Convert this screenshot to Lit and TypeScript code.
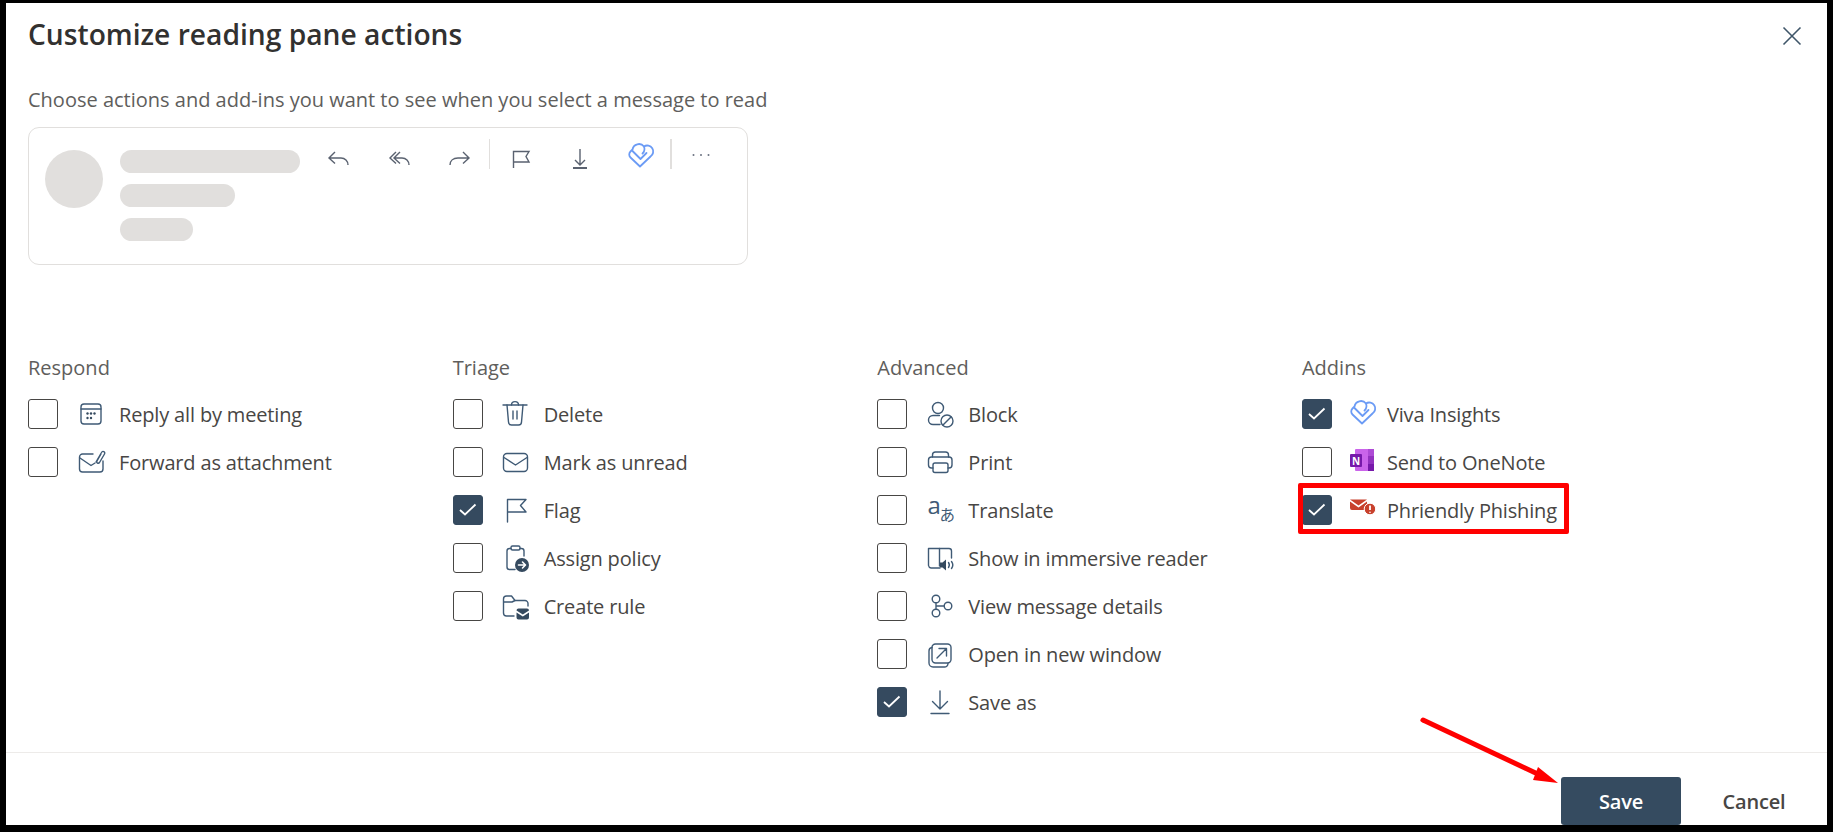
import { LitElement, html, css, svg } from "lit";
import { customElement } from "lit/decorators.js";

const I: Record<string, unknown> = {
  calendar: svg`<rect x="6" y="6" width="20" height="20" rx="3"/><path d="M6 11H26"/><g class="f"><circle cx="12.5" cy="15.5" r="1.2"/><circle cx="16" cy="15.5" r="1.2"/><circle cx="19.5" cy="15.5" r="1.2"/><circle cx="12.5" cy="20" r="1.2"/><circle cx="16" cy="20" r="1.2"/></g>`,
  attach: svg`<path d="M18 8H7.500A3 3 0 0 0 4.500 11V23A3 3 0 0 0 7.500 26H25A3 3 0 0 0 28 23V15"/><path d="M5 12L16 19.500L20 17"/><path d="M21 16L26.500 6.500C27.500 4.500 30.500 5.500 29.500 8L24.500 16.500C23.500 18 21 17 22 15L26 8"/>`,
  trash: svg`<path d="M3 7H27"/><path d="M11.500 7C11.500 2.500 18.500 2.500 18.500 7"/><path d="M7 7L8.500 24A3 3 0 0 0 11.500 27H18.500A3 3 0 0 0 21.500 24L23 7"/><path d="M13 13V21M17 13V21"/>`,
  mail: svg`<rect x="3.500" y="7.500" width="24" height="18" rx="3.500"/><path d="M4 11.500L15.500 19L27 11.500"/>`,
  flag: svg`<path d="M7.500 28V5.500H26L20.500 11.500L26 18H7.500"/>`,
  policy: svg`<path d="M11 6.500H9.500A2.500 2.500 0 0 0 7 9V25A2.500 2.500 0 0 0 9.500 27.500H15"/><path d="M20 6.500H21.500A2.500 2.500 0 0 1 24 9V14"/><rect x="11" y="4" width="9" height="4" rx="1.500"/><circle class="f" cx="22" cy="23" r="7"/><path class="w" d="M18.500 23H25M22.500 20L25.500 23L22.500 26"/>`,
  rule: svg`<path d="M14 26H6.500A3 3 0 0 1 3.500 23V9A3 3 0 0 1 6.500 6H11.500L15 10.500H25A3 3 0 0 1 28 13.500V16"/><path d="M4 12H12L15 10.500"/><path class="f" d="M16.500 20.500A2 2 0 0 1 18.500 18.500H27A2 2 0 0 1 29 20.500L22.800 24.500ZM16.500 22.500L22.800 26.500L29 22.500V27.500A2 2 0 0 1 27 29.500H18.500A2 2 0 0 1 16.500 27.500Z" stroke="none"/>`,
  block: svg`<circle cx="14" cy="10" r="5.500"/><path d="M15.500 17.500H9A4.500 4.500 0 0 0 9 26.500H16"/><circle cx="23" cy="23" r="6"/><path d="M19 27L27 19"/>`,
  print: svg`<path d="M8.500 11V9A3 3 0 0 1 11.500 6H21.500A3 3 0 0 1 24.500 9V11"/><path d="M9 22H7.500A3 3 0 0 1 4.500 19V14A3 3 0 0 1 7.500 11H25A3 3 0 0 1 28 14V19A3 3 0 0 1 25 22H24"/><rect x="9" y="17" width="15" height="9.500" rx="2"/>`,
  reader: svg`<path d="M16 26H7A3 3 0 0 1 4.500 23.500V6.500H15.500V24"/><path d="M15.500 6.500H25A2.500 2.500 0 0 1 27.500 9V16"/><path class="f" stroke="none" d="M16 20.500H18.500L22 17.500V28.500L18.500 25.500H16Z"/><path d="M24.500 20.500C25.500 22 25.500 24 24.500 25.500M27.500 19.500C29 21.500 29 24.500 27.500 26.500"/>`,
  details: svg`<circle cx="12" cy="9" r="3.800"/><circle cx="12" cy="23" r="3.800"/><circle cx="24" cy="16" r="3.800"/><path d="M12 13V19M12 16H20"/>`,
  open: svg`<rect x="8" y="6" width="19" height="19" rx="3.500"/><path d="M8 9.500A3.500 3.500 0 0 0 5 13V25A4 4 0 0 0 9 29H20A3.500 3.500 0 0 0 24 25.500"/><path d="M13 20L22 11M15 10.500H22.500V18"/>`,
  save: svg`<path d="M16 5V23M8.500 15.500L16 23L23.500 15.500M7 27.500H25"/>`,
};

const VIVA = svg`<path d="M12 23.500L2.500 14.500A4.200 4.200 0 0 1 2.500 8.500L4.500 6.500A6.500 6.500 0 0 1 16 3.500A5.500 5.500 0 0 1 22.500 13.500Z"/><path d="M4.500 8L12.500 16L18.500 10"/><path d="M16 3.500C17 6 16.500 8.500 14.500 10.500"/>`;

@customElement("app-root")
export class AppRoot extends LitElement {
  static styles = css`
    :host { display: block; position: relative; width: 1833px; height: 832px; box-sizing: border-box; background: #000; padding: 3px 6px 7px 6px; font-family: "Open Sans", "Noto Sans", sans-serif; color: #484644; overflow: hidden; }
    .dialog { height: 100%; background: #fff; display: flex; flex-direction: column; }
    .main { flex: 1; padding: 13px 22px 0 22px; }
    .head { display: flex; justify-content: space-between; align-items: center; height: 36px; }
    h1 { margin: 0; font-size: 28.2px; font-weight: 600; line-height: 36px; color: #323130; }
    .close { width: 24px; height: 24px; margin-right: 1px; margin-top: 4px; }
    .close path { stroke: #3f5669; stroke-width: 1.6; fill: none; }
    .sub { margin: 34px 0 13px; font-size: 20px; line-height: 28px; color: #605e5c; }
    .card { width: 720px; height: 138px; box-sizing: border-box; border: 1.5px solid #e1dfdd; border-radius: 11px; padding: 22px 0 0 15.500px; display: flex; align-items: flex-start; }
    .avatar { width: 58px; height: 58px; border-radius: 50%; background: #e1dfdd; flex: none; }
    .bars { display: flex; flex-direction: column; gap: 11px; margin-left: 17px; width: 180px; flex: none; }
    .bar { height: 23px; border-radius: 12px; background: #e1dfdd; }
    .b1 { width: 180px; } .b2 { width: 115px; } .b3 { width: 73px; }
    .tools { display: flex; margin: -11px 0 0 9px; }
    .tool { width: 60px; height: 30px; display: flex; justify-content: center; }
    .tool svg { width: 30px; height: 30px; fill: none; stroke: #5a6270; stroke-width: 1.4; overflow: visible; }
    .tool .blue { stroke: #6b9bf5; stroke-width: 1.8; stroke-linejoin: round; stroke-linecap: round; }
    .tool .dot { fill: #6b7280; stroke: none; }
    .sep { width: 1px; height: 30px; background: #e1dfdd; }
    .sep.wide { width: 2px; }
    .cols { display: grid; grid-template-columns: repeat(4, 424.67px); margin-top: 89px; }
    h2 { margin: 0 0 17px; font-size: 20px; font-weight: 400; line-height: 28px; color: #605e5c; }
    .rows { display: flex; flex-direction: column; gap: 18px; }
    .row { display: flex; align-items: center; height: 30px; font-size: 20px; letter-spacing: -0.16px; white-space: nowrap; }
    .box { width: 30px; height: 30px; box-sizing: border-box; border: 1px solid #484644; border-radius: 3px; flex: none; display: flex; align-items: center; justify-content: center; }
    .box.on { background: #354a5f; border-color: #354a5f; }
    .box svg { width: 20px; height: 20px; fill: none; stroke: #fff; stroke-width: 1.8; }
    .icon { width: 32px; height: 32px; margin: 0 12px 0 17px; flex: none; fill: none; stroke: #3f5a75; stroke-width: 1.4; stroke-linecap: round; stroke-linejoin: round; overflow: visible; }
    .addins .icon { margin-right: 6px; }
    .icon .f { fill: #354a5f; stroke: none; }
    .icon .w { stroke: #fff; stroke-width: 1.6; }
    .icon text { stroke: none; fill: #3f5a75; }
    .foot { height: 73px; box-sizing: border-box; border-top: 1px solid #edebe9; display: flex; justify-content: flex-end; align-items: flex-end; }
    button { font: inherit; border: 0; background: none; height: 48px; font-size: 20px; padding: 0; letter-spacing: -0.2px; }
    .save { width: 120px; background: #354b60; color: #fff; font-weight: 600; border-radius: 3px; }
    .cancel { width: 146px; color: #484644; font-weight: 600; }
    .mark { position: absolute; left: 1298px; top: 483px; width: 271px; height: 51px; box-sizing: border-box; border: 5px solid #f00; border-radius: 2px; }
    .arrow { position: absolute; left: 1410px; top: 710px; width: 160px; height: 85px; }
  `;

  private box(on: boolean) {
    return html`<span class="box ${on ? "on" : ""}">${on
      ? html`<svg viewBox="0 0 20 20"><path d="M2 10L7 14.500L17.500 4.500"/></svg>` : ""}</span>`;
  }

  private row(label: string, icon: unknown, on = false) {
    return html`<div class="row">${this.box(on)}<svg class="icon" viewBox="0 0 32 32">${icon}</svg><span>${label}</span></div>`;
  }

  render() {
    const translate = svg`<text x="3.500" y="20" font-size="24" font-family="Open Sans">a</text><text x="15.500" y="26.500" font-size="15.500" font-family="Noto Sans CJK JP">あ</text>`;
    const viva = svg`<g transform="translate(1 2)" stroke="#6b9bf5" stroke-width="1.8">${VIVA}</g>`;
    const note = svg`<rect x="6" y="3" width="19" height="22" rx="1" fill="#ca64ea" stroke="none"/><rect x="19" y="3" width="6" height="7" fill="#ae4bd5" stroke="none"/><rect x="19" y="10" width="6" height="8" fill="#9332bf" stroke="none"/><rect x="19" y="18" width="6" height="7" fill="#7719aa" stroke="none"/><rect x="1" y="8" width="12" height="13" rx="1" fill="#7719aa" stroke="none"/><text x="3" y="18.500" font-size="10" font-weight="700" font-family="Open Sans" style="fill:#fff">N</text>`;
    const phish = svg`<path d="M1 5.500H18L9.500 11.500Z" fill="#c8412c" stroke="none"/><path d="M1 7.500L9.500 13.500L18 7.500V14A2 2 0 0 1 16 16H3A2 2 0 0 1 1 14Z" fill="#c8412c" stroke="none"/><circle cx="21" cy="15" r="5.800" fill="#c8412c" stroke="#fff" stroke-width="1"/><path d="M21 11.500V16M21 17.800V18.800" stroke="#fff" stroke-width="1.800" stroke-linecap="butt"/>`;
    return html`
      <div class="dialog">
        <div class="main">
          <div class="head">
            <h1>Customize reading pane actions</h1>
            <svg class="close" viewBox="0 0 24 24"><path d="M3.500 3.500L20.500 20.500M20.500 3.500L3.500 20.500"/></svg>
          </div>
          <p class="sub">Choose actions and add-ins you want to see when you select a message to read</p>
          <div class="card">
            <div class="avatar"></div>
            <div class="bars"><div class="bar b1"></div><div class="bar b2"></div><div class="bar b3"></div></div>
            <div class="tools">
              <div class="tool"><svg viewBox="0 0 30 30"><path d="M11 13L5 19L11 24.500M5 19H17C21 19 24 22 24 26"/></svg></div>
              <div class="tool"><svg viewBox="0 0 30 30"><path d="M12 13L6 19L12 24.500M16 13L10 19L16 24.500M10 19H18C22 19 25 22 25 26"/></svg></div>
              <div class="tool"><svg viewBox="0 0 30 30"><path d="M19 13L25 19L19 24.500M25 19H14C9 19 6 22 6 26"/></svg></div>
              <div class="sep"></div>
              <div class="tool"><svg viewBox="0 0 30 30"><path d="M8.500 29V12.500H24L21 17.500L24 23H8.500"/></svg></div>
              <div class="tool"><svg viewBox="0 0 30 30"><path d="M15 10V26M10 21L15 26L20 21"/><path d="M8 29H22" stroke-width="2"/></svg></div>
              <div class="tool"><svg viewBox="0 0 30 30"><g class="blue" transform="translate(3 4)">${VIVA}</g></svg></div>
              <div class="sep wide"></div>
              <div class="tool"><svg viewBox="0 0 30 30"><circle class="dot" cx="6.500" cy="16" r="1"/><circle class="dot" cx="14" cy="16" r="1"/><circle class="dot" cx="21.500" cy="16" r="1"/></svg></div>
            </div>
          </div>
          <div class="cols">
            <section><h2>Respond</h2><div class="rows">
              ${this.row("Reply all by meeting", I.calendar)}
              ${this.row("Forward as attachment", I.attach)}
            </div></section>
            <section><h2>Triage</h2><div class="rows">
              ${this.row("Delete", I.trash)}
              ${this.row("Mark as unread", I.mail)}
              ${this.row("Flag", I.flag, true)}
              ${this.row("Assign policy", I.policy)}
              ${this.row("Create rule", I.rule)}
            </div></section>
            <section><h2>Advanced</h2><div class="rows">
              ${this.row("Block", I.block)}
              ${this.row("Print", I.print)}
              ${this.row("Translate", translate)}
              ${this.row("Show in immersive reader", I.reader)}
              ${this.row("View message details", I.details)}
              ${this.row("Open in new window", I.open)}
              ${this.row("Save as", I.save, true)}
            </div></section>
            <section class="addins"><h2>Addins</h2><div class="rows">
              ${this.row("Viva Insights", viva, true)}
              ${this.row("Send to OneNote", note)}
              ${this.row("Phriendly Phishing", phish, true)}
            </div></section>
          </div>
        </div>
        <div class="foot"><button class="save">Save</button><button class="cancel">Cancel</button></div>
      </div>
      <div class="mark"></div>
      <svg class="arrow" viewBox="0 0 160 85"><path d="M13 10L132 66" stroke="#f00" stroke-width="5" stroke-linecap="round" fill="none"/><path d="M148 73L128 57L123 70Z" fill="#f00"/></svg>
    `;
  }
}
